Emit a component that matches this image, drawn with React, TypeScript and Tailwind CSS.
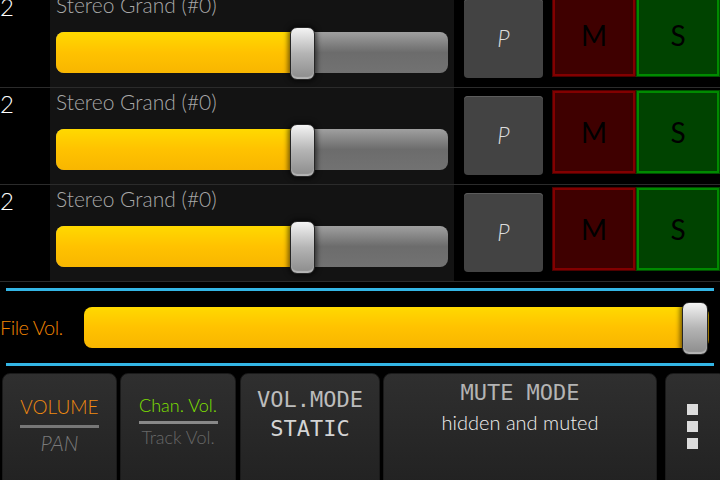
import React from "react";

const HAND = "font-['Lato','Roboto',sans-serif] font-light";
const MONO = "font-['DejaVu_Sans_Mono',monospace]";

function Thumb({ pos }: { pos: string }) {
  return (
    <div
      className={`absolute ${pos} rounded-[7px] border border-[#262626] bg-linear-to-b from-[#f4f4f4] via-[#b4b4b4] to-[#8c8c8c] shadow-[0_0_5px_2px_rgba(0,0,0,0.55),inset_0_-2px_1px_rgba(255,255,255,0.35)]`}
    />
  );
}

function TrackRow() {
  return (
    <div className="flex h-[97px] shrink-0 border-b border-[#2b2b2b]">
      <div className={`w-[50px] shrink-0 pt-[2px] text-[24px] leading-[28px] text-white ${HAND}`}>2</div>
      <div className="w-[404px] shrink-0 bg-[#131313] px-[6px] pt-[2px]">
        <div className={`text-[21px] leading-[24px] text-[#a8a8a8] ${HAND}`}>Stereo Grand (#0)</div>
        <div className="relative mt-[15px] h-[41px] rounded-[8px] bg-linear-to-b from-[#a0a0a0] via-[#6c6c6c] to-[#727272]">
          <div className="absolute left-0 top-0 h-full w-[246px] rounded-l-[8px] bg-linear-to-b from-[#ffd900] via-[#ffc200] to-[#f8b600]" />
          <Thumb pos="left-[234px] top-[-5px] h-[53px] w-[25px]" />
        </div>
      </div>
      <div
        className={`ml-[10px] mt-[8px] flex h-[79px] w-[79px] shrink-0 items-center justify-center rounded-[4px] bg-[#434343] text-[23px] italic text-[#dcdcdc] shadow-[inset_0_1px_0_#5c5c5c] ${HAND}`}
      >
        P
      </div>
      <div className="ml-[9px] mt-[2px] h-[84px] w-[84px] shrink-0 bg-[#4e0000] p-[1px]">
        <div className="flex h-full w-full items-center justify-center border-2 border-[#820000] bg-[#3f0000] font-['Lato','Roboto',sans-serif] text-[28px] font-normal text-black">
          M
        </div>
      </div>
      <div className="mt-[2px] h-[84px] w-[84px] shrink-0 bg-[#004e00] p-[1px]">
        <div className="flex h-full w-full items-center justify-center border-2 border-[#008a00] bg-[#004300] font-['Lato','Roboto',sans-serif] text-[28px] font-normal text-black">
          S
        </div>
      </div>
    </div>
  );
}

export default function App() {
  return (
    <div className="relative flex h-[480px] w-[720px] flex-col overflow-hidden bg-black">
      <div className="mt-[-9px] flex flex-col">
        <TrackRow />
        <TrackRow />
        <TrackRow />
      </div>

      <div className="mx-[6px] mt-[6px] h-[3px] shrink-0 bg-[#33b5e5]" />

      <div className="flex h-[72px] shrink-0 items-center">
        <div className={`w-[84px] shrink-0 text-[20px] leading-[24px] tracking-[-0.5px] text-[#f08400] ${HAND}`}>File Vol.</div>
        <div className="relative h-[41px] w-[625px] shrink-0 rounded-[8px] bg-linear-to-b from-[#ffd900] via-[#ffc200] to-[#f8b600]">
          <Thumb pos="left-[598px] top-[-5px] h-[53px] w-[26px]" />
        </div>
      </div>

      <div className="mx-[6px] h-[3px] shrink-0 bg-[#33b5e5]" />

      <div className="mt-[7px] flex h-[120px] shrink-0">
        <div className="ml-[2px] flex w-[115px] shrink-0 flex-col items-center rounded-[8px] border border-[#1a1a1a] bg-linear-to-b from-[#2f2f2f] to-[#212121] pt-[21px]">
          <div className={`text-[19px] leading-[24px] text-[#f08a10] ${HAND}`}>VOLUME</div>
          <div className="mt-[6px] h-[3px] w-[79px] bg-[#777777]" />
          <div className={`mt-[3px] text-[21px] italic leading-[24px] text-[#7a7a7a] ${HAND}`}>PAN</div>
        </div>
        <div className="ml-[3px] flex w-[116px] shrink-0 flex-col items-center rounded-[8px] border border-[#1a1a1a] bg-linear-to-b from-[#2f2f2f] to-[#212121] pt-[21px]">
          <div className={`text-[18px] leading-[20px] text-[#7fe000] ${HAND}`}>Chan. Vol.</div>
          <div className="mt-[6px] h-[3px] w-[79px] bg-[#888888]" />
          <div className={`mt-[3px] text-[18px] leading-[20px] text-[#676767] ${HAND}`}>Track Vol.</div>
        </div>
        <div className="ml-[4px] flex w-[140px] shrink-0 flex-col items-center rounded-[8px] border border-[#1a1a1a] bg-linear-to-b from-[#2f2f2f] to-[#212121] pt-[13px]">
          <div className={`text-[22px] leading-[26px] text-[#bcbcbc] ${MONO}`}>VOL.MODE</div>
          <div className={`mt-[3px] text-[22px] leading-[26px] text-[#d4d4d4] ${MONO}`}>STATIC</div>
        </div>
        <div className="ml-[3px] flex w-[274px] shrink-0 flex-col items-center rounded-[8px] border border-[#1a1a1a] bg-linear-to-b from-[#2f2f2f] to-[#212121] pt-[6px]">
          <div className={`text-[22px] leading-[26px] text-[#b4b4b4] ${MONO}`}>MUTE MODE</div>
          <div className={`mt-[5px] text-[20px] leading-[22px] text-[#f0f0f0] ${HAND}`}>hidden and muted</div>
        </div>
        <div className="ml-[8px] flex w-[62px] shrink-0 flex-col gap-[6px] rounded-[8px] border border-[#1a1a1a] bg-linear-to-b from-[#2f2f2f] to-[#212121] pl-[21px] pt-[30px]">
          <div className="h-[11px] w-[11px] bg-[#dcdcdc]" />
          <div className="h-[11px] w-[11px] bg-[#dcdcdc]" />
          <div className="h-[11px] w-[11px] bg-[#dcdcdc]" />
        </div>
      </div>
    </div>
  );
}
